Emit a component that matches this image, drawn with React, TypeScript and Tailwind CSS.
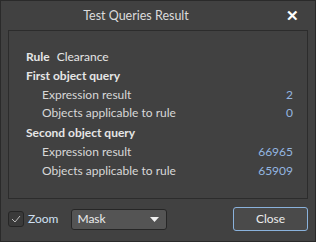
import { useState } from 'react';

const rows = [
  { label: 'Expression result', value: '2' },
  { label: 'Objects applicable to rule', value: '0' },
];

const rows2 = [
  { label: 'Expression result', value: '66965' },
  { label: 'Objects applicable to rule', value: '65909' },
];

const App = () => {
  const [zoom, setZoom] = useState(true);

  return (
    <div
      className="w-[316px] h-[242px] bg-[#414141] border border-[#2a2a2a] text-[12px] text-[#e6e6e6] flex flex-col"
      style={{ fontFamily: 'Lato, "Noto Sans", sans-serif' }}
    >
      {/* title bar */}
      <div className="h-[29px] relative flex items-center justify-center">
        <span className="text-[12.5px] text-[#dcdcdc] mt-[2px] ml-[-44px]">Test Queries Result</span>
        <span className="absolute right-[16px] top-[3px] text-[15px] font-bold text-white">✕</span>
      </div>

      {/* results panel */}
      <div className="mx-[7px] h-[169px] border border-[#2c2c2c] pt-[17px] pl-[17px] pr-[14px] leading-[18.8px]">
        <div className="font-bold flex gap-[7px]">
          <span>Rule</span>
          <span className="font-normal">Clearance</span>
        </div>
        <div className="font-bold">First object query</div>
        {rows.map((r) => (
          <div key={r.label} className="flex justify-between pl-[16px] text-[#d8d8d8]">
            <span>{r.label}</span>
            <span className="text-[#94b6e0]">{r.value}</span>
          </div>
        ))}
        <div className="font-bold mt-[1px]">Second object query</div>
        {rows2.map((r) => (
          <div key={r.label} className="flex justify-between pl-[16px] text-[#d8d8d8]">
            <span>{r.label}</span>
            <span className="text-[#94b6e0]">{r.value}</span>
          </div>
        ))}
      </div>

      {/* footer */}
      <div className="flex items-center px-[7px] mt-[8px]">
        <button
          onClick={() => setZoom(!zoom)}
          className="w-[16px] h-[16px] rounded-[3px] border border-[#262626] bg-[#3a3a3a] flex items-center justify-center"
        >
          {zoom && (
            <svg width="10" height="8" viewBox="0 0 10 8">
              <path d="M1 4 L4 7 L9 1" fill="none" stroke="#bcbcbc" strokeWidth="1" />
            </svg>
          )}
        </button>
        <span className="ml-[4px] text-[#cfe0f2]">Zoom</span>
        <div className="ml-[13px] w-[96px] h-[21px] rounded-[3px] border border-[#262626] bg-[#545454] flex items-center justify-between pl-[5px] pr-[7px]">
          <span className="text-[#ececec]">Mask</span>
          <svg width="9" height="5" viewBox="0 0 9 5">
            <path d="M0 0 H9 L4.5 5 Z" fill="#f0f0f0" />
          </svg>
        </div>
        <button className="ml-auto w-[75px] h-[24px] rounded-[3px] border border-[#8ab2dc] bg-[#4a4a4a] text-[#ececec]">
          Close
        </button>
      </div>
    </div>
  );
};

export default App;
